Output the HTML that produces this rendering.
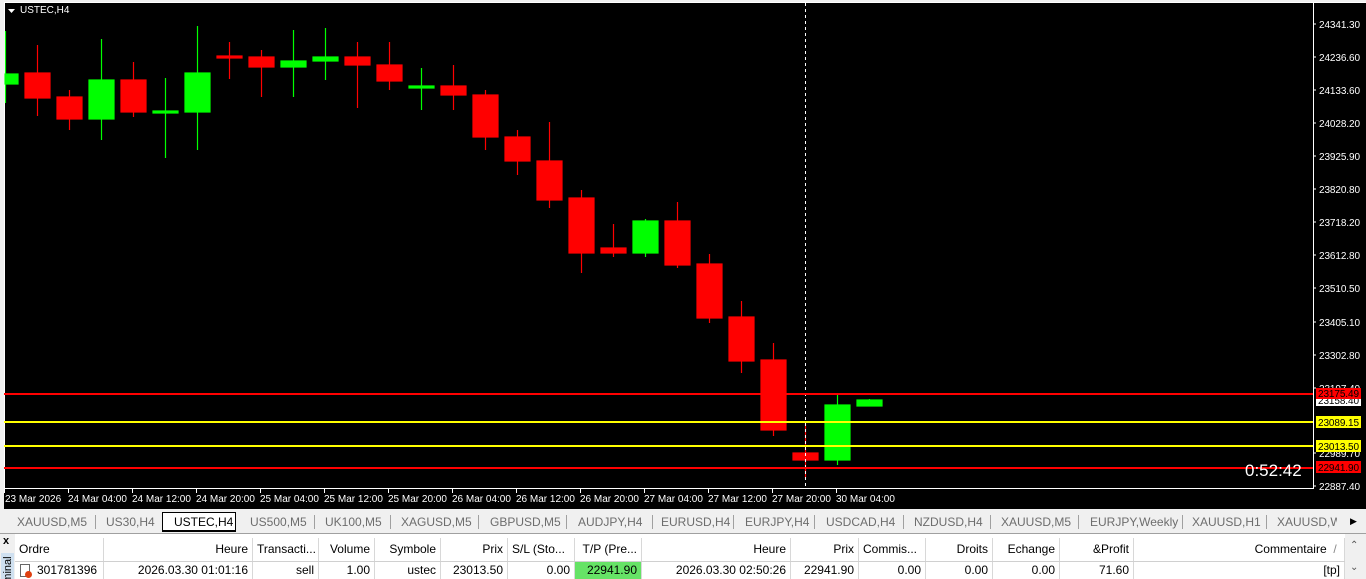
<!DOCTYPE html><html style="overflow:hidden;height:579px"><head><meta charset="utf-8"><style>
body{margin:0;width:1366px;height:579px;overflow:hidden;background:#f0f0f0;font-family:"Liberation Sans",sans-serif;position:relative}
.a{position:absolute}
.tab{position:absolute;top:513px;height:18px;font-size:12px;color:#6d6d6d;line-height:18px}
.sep{position:absolute;top:515px;width:1px;height:14px;background:#a0a0a0}
.h{position:absolute;top:538px;height:23px;line-height:23px;font-size:12px;color:#000;border-right:1px solid #d8d8d8;box-sizing:border-box;padding:0 4px;background:#fff;white-space:nowrap;overflow:hidden}
.r{position:absolute;top:562px;height:17px;line-height:17px;font-size:12px;color:#000;border-right:1px solid #d8d8d8;box-sizing:border-box;padding:0 4px;background:#fff;text-align:right}
</style></head><body>
<svg class="a" style="left:0;top:0" width="1366" height="511" font-family="Liberation Sans" font-size="10">
<rect x="0" y="0" width="1366" height="511" fill="#f0f0f0"/>
<rect x="4" y="2" width="1362" height="507" fill="#000"/>
<line x1="4" y1="2.5" x2="1366" y2="2.5" stroke="#fff"/>
<line x1="4.5" y1="2" x2="4.5" y2="489" stroke="#fff"/>
<line x1="4" y1="488.5" x2="1313" y2="488.5" stroke="#fff"/>
<line x1="1313.5" y1="2" x2="1313.5" y2="489" stroke="#fff"/>
<path d="M8 9h7l-3.5 4z" fill="#fff"/>
<text x="20" y="13" fill="#fff" font-size="10">USTEC,H4</text>
<g stroke-width="1.2">
<g stroke="#00ff00" fill="#00ff00"><line x1="5.5" y1="31" x2="5.5" y2="103"/><rect x="5" y="74" width="13" height="10"/>
<line x1="101.5" y1="39" x2="101.5" y2="140"/><rect x="89" y="80" width="25" height="39"/>
<line x1="165.5" y1="78" x2="165.5" y2="158"/><rect x="153" y="111" width="25" height="2"/>
<line x1="197.5" y1="26" x2="197.5" y2="150"/><rect x="185" y="73" width="25" height="39"/>
<line x1="293.5" y1="30" x2="293.5" y2="97"/><rect x="281" y="61" width="25" height="6"/>
<line x1="325.5" y1="28" x2="325.5" y2="80"/><rect x="313" y="57" width="25" height="4"/>
<line x1="421.5" y1="68" x2="421.5" y2="110"/><rect x="409" y="86" width="25" height="2"/>
<line x1="645.5" y1="219" x2="645.5" y2="257"/><rect x="633" y="221" width="25" height="32"/>
<line x1="837.5" y1="394" x2="837.5" y2="465"/><rect x="825" y="405" width="25" height="55"/>
<line x1="869.5" y1="399" x2="869.5" y2="406"/><rect x="857" y="400" width="25" height="6"/></g>
<g stroke="#ff0000" fill="#ff0000"><line x1="37.5" y1="45" x2="37.5" y2="116"/><rect x="25" y="73" width="25" height="25"/>
<line x1="69.5" y1="90" x2="69.5" y2="130"/><rect x="57" y="97" width="25" height="22"/>
<line x1="133.5" y1="62" x2="133.5" y2="117"/><rect x="121" y="80" width="25" height="32"/>
<line x1="229.5" y1="42" x2="229.5" y2="79"/><rect x="217" y="56" width="25" height="2"/>
<line x1="261.5" y1="50" x2="261.5" y2="97"/><rect x="249" y="57" width="25" height="10"/>
<line x1="357.5" y1="42" x2="357.5" y2="108"/><rect x="345" y="57" width="25" height="8"/>
<line x1="389.5" y1="42" x2="389.5" y2="90"/><rect x="377" y="65" width="25" height="16"/>
<line x1="453.5" y1="65" x2="453.5" y2="110"/><rect x="441" y="86" width="25" height="9"/>
<line x1="485.5" y1="90" x2="485.5" y2="150"/><rect x="473" y="95" width="25" height="42"/>
<line x1="517.5" y1="130" x2="517.5" y2="175"/><rect x="505" y="137" width="25" height="24"/>
<line x1="549.5" y1="122" x2="549.5" y2="208"/><rect x="537" y="161" width="25" height="39"/>
<line x1="581.5" y1="190" x2="581.5" y2="273"/><rect x="569" y="198" width="25" height="55"/>
<line x1="613.5" y1="224" x2="613.5" y2="257"/><rect x="601" y="248" width="25" height="5"/>
<line x1="677.5" y1="202" x2="677.5" y2="268"/><rect x="665" y="221" width="25" height="44"/>
<line x1="709.5" y1="254" x2="709.5" y2="323"/><rect x="697" y="264" width="25" height="54"/>
<line x1="741.5" y1="301" x2="741.5" y2="373"/><rect x="729" y="317" width="25" height="44"/>
<line x1="773.5" y1="343" x2="773.5" y2="436"/><rect x="761" y="360" width="25" height="70"/>
<line x1="805.5" y1="423" x2="805.5" y2="478"/><rect x="793" y="453" width="25" height="7"/></g>
</g>
<line x1="805.5" y1="3" x2="805.5" y2="488" stroke="#fff" stroke-dasharray="3,3"/>
<rect x="4" y="393" width="1309" height="2" fill="#ff0000"/>
<rect x="4" y="421" width="1309" height="2" fill="#ffff00"/>
<rect x="4" y="445" width="1309" height="2" fill="#ffff00"/>
<rect x="4" y="467" width="1309" height="2" fill="#ff0000"/>
<text x="1245" y="476" fill="#fff" font-size="17">0:52:42</text>
<g fill="#fff" font-size="10">
<text x="1319" y="28" textLength="41">24341.30</text><text x="1319" y="61" textLength="41">24236.60</text><text x="1319" y="94" textLength="41">24133.60</text><text x="1319" y="127" textLength="41">24028.20</text><text x="1319" y="160" textLength="41">23925.90</text><text x="1319" y="193" textLength="41">23820.80</text><text x="1319" y="226" textLength="41">23718.20</text><text x="1319" y="259" textLength="41">23612.80</text><text x="1319" y="292" textLength="41">23510.50</text><text x="1319" y="326" textLength="41">23405.10</text><text x="1319" y="359" textLength="41">23302.80</text><text x="1319" y="392" textLength="41">23197.40</text><text x="1319" y="457" textLength="41">22989.70</text><text x="1319" y="490" textLength="41">22887.40</text></g>
<g stroke="#fff"><path d="M1313 24h3M1313 57h3M1313 90h3M1313 123h3M1313 156h3M1313 189h3M1313 222h3M1313 255h3M1313 288h3M1313 322h3M1313 355h3M1313 388h3M1313 453h3M1313 486h3"/></g>
<rect x="1316" y="395" width="45" height="11" fill="#fff"/><text x="1318" y="404" fill="#000" textLength="41">23158.40</text>
<rect x="1316" y="388" width="45" height="11" fill="#ff0000"/><text x="1318" y="397" fill="#000" textLength="41">23175.49</text>
<rect x="1316" y="416" width="45" height="12" fill="#ffff00"/><text x="1318" y="426" fill="#000" textLength="41">23089.15</text>
<rect x="1316" y="440" width="45" height="12" fill="#ffff00"/><text x="1318" y="450" fill="#000" textLength="41">23013.50</text>
<rect x="1316" y="461" width="45" height="12" fill="#ff0000"/><text x="1318" y="471" fill="#000" textLength="41">22941.90</text>
<g fill="#fff" font-size="10">
<text x="5" y="502">23 Mar 2026</text><text x="68" y="502">24 Mar 04:00</text><text x="132" y="502">24 Mar 12:00</text><text x="196" y="502">24 Mar 20:00</text><text x="260" y="502">25 Mar 04:00</text><text x="324" y="502">25 Mar 12:00</text><text x="388" y="502">25 Mar 20:00</text><text x="452" y="502">26 Mar 04:00</text><text x="516" y="502">26 Mar 12:00</text><text x="580" y="502">26 Mar 20:00</text><text x="644" y="502">27 Mar 04:00</text><text x="708" y="502">27 Mar 12:00</text><text x="772" y="502">27 Mar 20:00</text><text x="836" y="502">30 Mar 04:00</text></g>
<path stroke="#fff" d="M4.5 489v4M68.5 489v4M132.5 489v4M196.5 489v4M260.5 489v4M324.5 489v4M388.5 489v4M452.5 489v4M516.5 489v4M580.5 489v4M644.5 489v4M708.5 489v4M772.5 489v4M836.5 489v4"/>
</svg>
<div class="a" style="left:0;top:511px;width:1366px;height:22px;background:#f0f0f0"></div>
<div class="a" style="left:162px;top:512px;width:74px;height:20px;background:#fff;border:1px solid #000;border-bottom:2px solid #000;box-sizing:border-box"></div>
<div class="tab" style="left:17px">XAUUSD,M5</div><div class="sep" style="left:95px"></div>
<div class="tab" style="left:106px">US30,H4</div>
<div class="tab" style="left:174px;color:#000">USTEC,H4</div>
<div class="tab" style="left:250px">US500,M5</div><div class="sep" style="left:314px"></div>
<div class="tab" style="left:325px">UK100,M5</div><div class="sep" style="left:390px"></div>
<div class="tab" style="left:401px">XAGUSD,M5</div><div class="sep" style="left:478px"></div>
<div class="tab" style="left:490px">GBPUSD,M5</div><div class="sep" style="left:566px"></div>
<div class="tab" style="left:578px">AUDJPY,H4</div><div class="sep" style="left:652px"></div>
<div class="tab" style="left:661px">EURUSD,H4</div><div class="sep" style="left:733px"></div>
<div class="tab" style="left:745px">EURJPY,H4</div><div class="sep" style="left:814px"></div>
<div class="tab" style="left:826px">USDCAD,H4</div><div class="sep" style="left:903px"></div>
<div class="tab" style="left:914px">NZDUSD,H4</div><div class="sep" style="left:990px"></div>
<div class="tab" style="left:1001px">XAUUSD,M5</div><div class="sep" style="left:1078px"></div>
<div class="tab" style="left:1090px">EURJPY,Weekly</div><div class="sep" style="left:1182px"></div>
<div class="tab" style="left:1192px">XAUUSD,H1</div><div class="sep" style="left:1266px"></div>
<div class="tab" style="left:1277px;width:60px;overflow:hidden;white-space:nowrap">XAUUSD,W1</div>
<div class="a" style="left:1350px;top:516px;font-size:9px;color:#000">&#9654;</div>
<div class="a" style="left:0;top:533px;width:1366px;height:46px;background:#fff;border-top:1px solid #a0a0a0"></div>
<div class="a" style="left:0;top:534px;width:15px;height:45px;background:#f0f0f0"></div>
<div class="a" style="left:3px;top:535px;font-size:11px;font-weight:bold">x</div>
<div class="a" style="left:1px;top:553px;width:13px;height:26px;background:#cfe0f0;overflow:hidden">
<div class="a" style="left:1px;top:45px;font-size:11px;transform:rotate(-90deg);transform-origin:0 0;white-space:nowrap">Terminal</div></div>
<div class="h" style="left:15px;width:89px">Ordre</div>
<div class="h" style="left:104px;width:149px;text-align:right">Heure</div>
<div class="h" style="left:253px;width:66px">Transacti...</div>
<div class="h" style="left:319px;width:56px;text-align:right">Volume</div>
<div class="h" style="left:375px;width:66px;text-align:right">Symbole</div>
<div class="h" style="left:441px;width:67px;text-align:right">Prix</div>
<div class="h" style="left:508px;width:67px">S/L (Sto...</div>
<div class="h" style="left:575px;width:67px;text-align:right">T/P (Pre...</div>
<div class="h" style="left:642px;width:149px;text-align:right">Heure</div>
<div class="h" style="left:791px;width:68px;text-align:right">Prix</div>
<div class="h" style="left:859px;width:67px">Commis...</div>
<div class="h" style="left:926px;width:67px;text-align:right">Droits</div>
<div class="h" style="left:993px;width:67px;text-align:right">Echange</div>
<div class="h" style="left:1060px;width:74px;text-align:right">&amp;Profit</div>
<div class="h" style="left:1134px;width:211px;text-align:right">Commentaire &nbsp;<span style="color:#888">/</span>&nbsp;</div>
<div class="a" style="left:15px;top:561px;width:1330px;height:1px;background:#d0d0d0"></div>
<div class="r" style="left:15px;width:89px;text-align:left;padding-left:22px">301781396</div>
<div class="a" style="left:20px;top:564px;width:10px;height:13px;border:1px solid #666;background:#fff;box-sizing:border-box"></div>
<div class="a" style="left:25px;top:571px;width:7px;height:7px;border-radius:50%;background:#e04010"></div>
<div class="r" style="left:104px;width:149px">2026.03.30 01:01:16</div>
<div class="r" style="left:253px;width:66px">sell</div>
<div class="r" style="left:319px;width:56px">1.00</div>
<div class="r" style="left:375px;width:66px">ustec</div>
<div class="r" style="left:441px;width:67px">23013.50</div>
<div class="r" style="left:508px;width:67px">0.00</div>
<div class="r" style="left:575px;width:67px;background:#66e366">22941.90</div>
<div class="r" style="left:642px;width:149px">2026.03.30 02:50:26</div>
<div class="r" style="left:791px;width:68px">22941.90</div>
<div class="r" style="left:859px;width:67px">0.00</div>
<div class="r" style="left:926px;width:67px">0.00</div>
<div class="r" style="left:993px;width:67px">0.00</div>
<div class="r" style="left:1060px;width:74px">71.60</div>
<div class="r" style="left:1134px;width:211px">[tp]</div>
<div class="a" style="left:1345px;top:534px;width:21px;height:45px;background:#f0f0f0"></div>
<div class="a" style="left:1350px;top:540px;font-size:10px;color:#555">&#8963;</div>
<div class="a" style="left:1350px;top:562px;font-size:10px;color:#555">&#8964;</div>
</body></html>
